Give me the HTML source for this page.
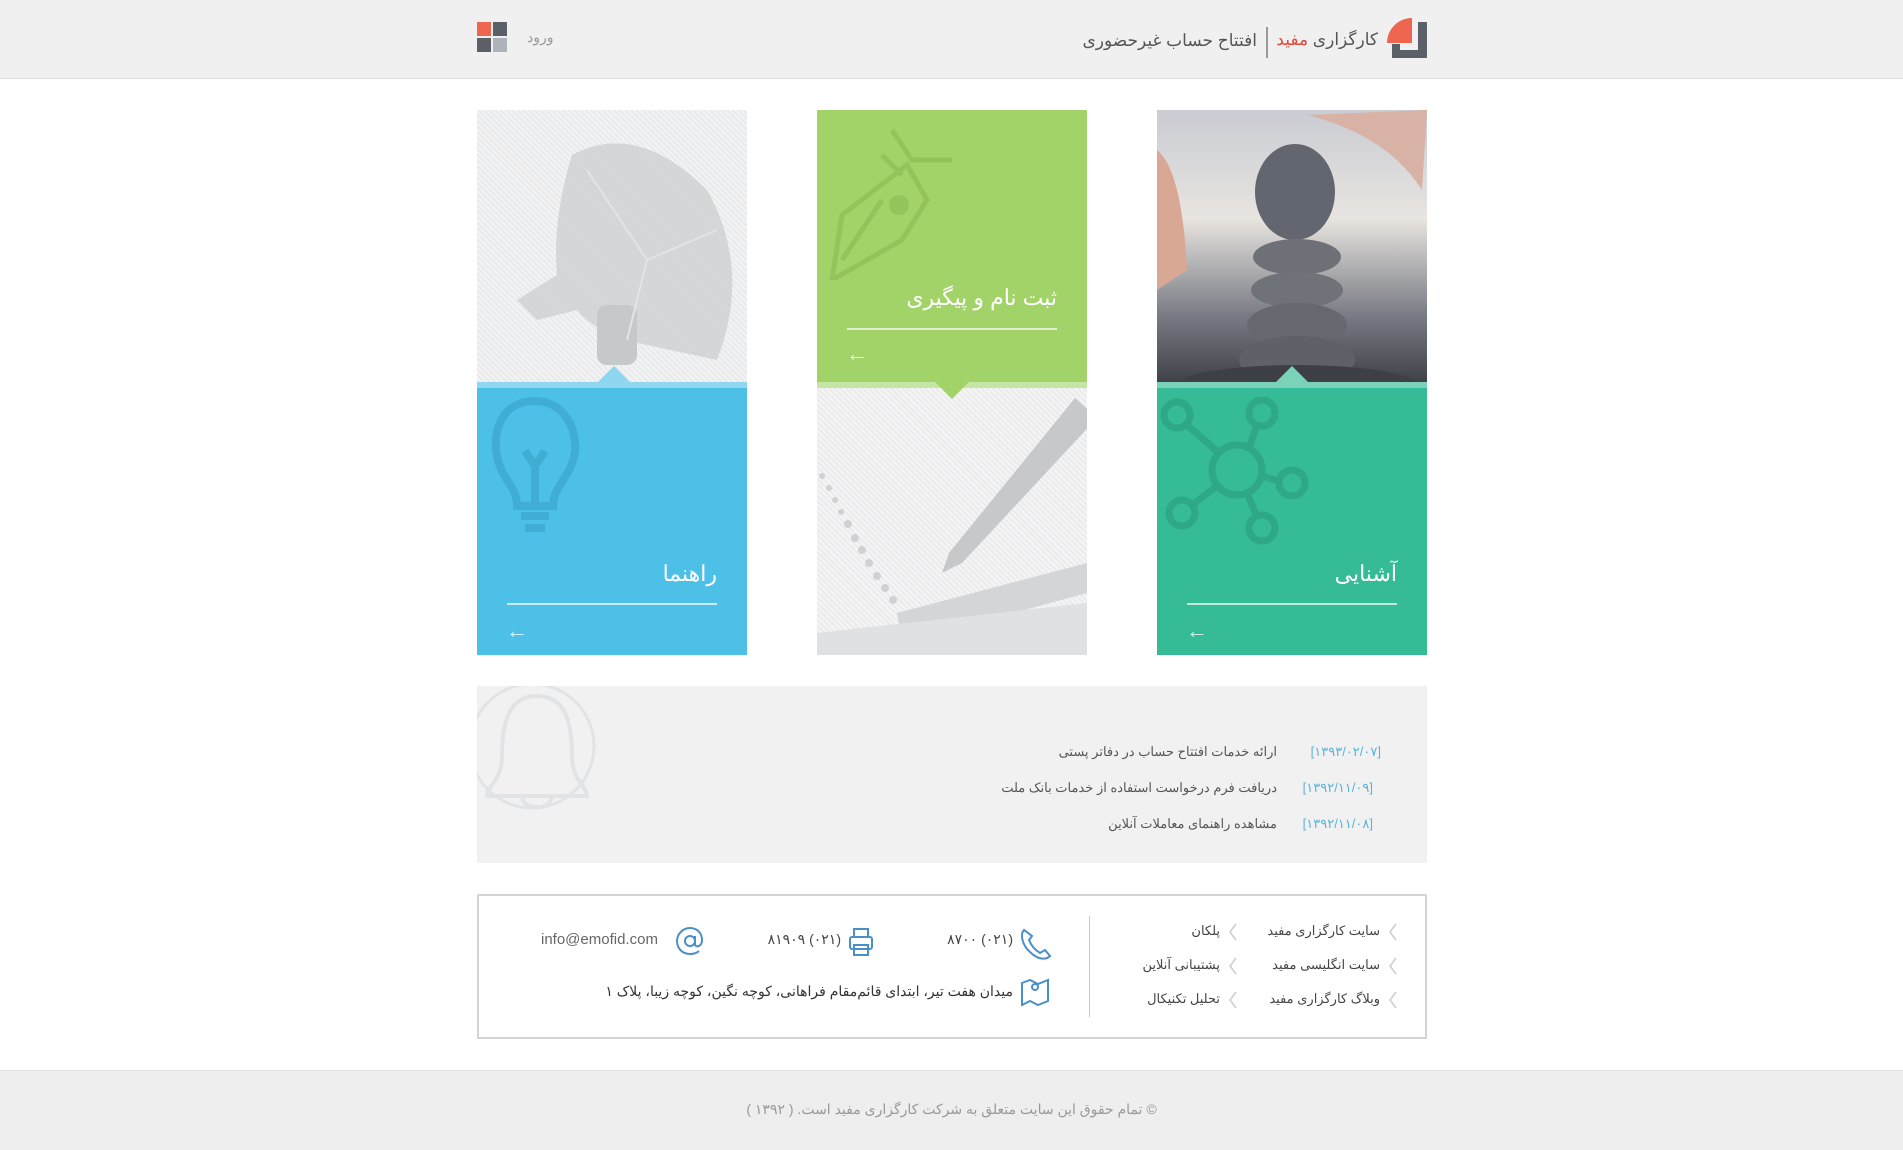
<!DOCTYPE html>
<html><head><meta charset="utf-8"><style>
*{margin:0;padding:0;box-sizing:border-box}
body{width:1903px;height:1150px;background:#fff;position:relative;overflow:hidden;font-family:"Liberation Sans","Noto Sans CJK SC",sans-serif;}
.a{position:absolute}
.r{position:absolute;direction:rtl;white-space:nowrap}
</style></head><body>
<!-- header -->
<div class="a" style="left:0;top:0;width:1903px;height:79px;background:#f0f0f0;border-bottom:1px solid #e2e2e2"></div>
<svg class="a" style="left:1387px;top:18px" width="40" height="40" viewBox="0 0 40 40">
<path d="M0 25 A25 25 0 0 1 25 0 L25 25 Z" fill="#ef6650"/>
<path d="M31 4 H40 V40 H5 V26 H13 V32 H31 Z" fill="#5b6068"/>
</svg>
<div class="r" style="right:525px;top:30px;font-size:17px;color:#555"><span>کارگزاری</span> <span style="color:#e04a3a">مفید</span></div>
<div class="a" style="left:1266px;top:27px;width:2px;height:31px;background:#999"></div>
<div class="r" style="right:646px;top:31px;font-size:17px;color:#555">افتتاح حساب غیرحضوری</div>
<div class="a" style="left:477px;top:22px;width:14px;height:14px;background:#ef6650"></div>
<div class="a" style="left:493px;top:22px;width:14px;height:14px;background:#5b6068"></div>
<div class="a" style="left:477px;top:38px;width:14px;height:14px;background:#5b6068"></div>
<div class="a" style="left:493px;top:38px;width:14px;height:14px;background:#aeb3ba"></div>
<div class="r" style="left:527px;top:29px;font-size:14px;color:#999">ورود</div>

<!-- card 1 -->
<div class="a" style="left:477px;top:110px;width:270px;height:272px;background:repeating-linear-gradient(45deg,#e9eaeb 0 2px,#f3f3f4 2px 4px);overflow:hidden">
<svg width="270" height="272"><path d="M95 45 Q160 10 230 80 Q275 160 240 250 L170 235 Q120 225 100 200 L60 210 L40 190 L80 165 Q75 110 95 45 Z" fill="#cfd1d3" opacity=".85"/><rect x="120" y="195" width="40" height="60" rx="10" fill="#c6c8ca"/><path d="M110 60 L170 150 L240 120 M170 150 L150 230" stroke="#e3e4e5" stroke-width="2" fill="none"/></svg></div>
<div class="a" style="left:477px;top:382px;width:270px;height:6px;background:#8fd6f0"></div>
<div class="a" style="left:477px;top:388px;width:270px;height:267px;background:#4dc0e8;overflow:hidden">
<svg class="a" style="left:10px;top:8px" width="110" height="150"><path d="M48 5 C15 5 5 35 10 60 C15 85 30 90 30 110 L66 110 C66 90 85 80 88 55 C90 30 75 5 48 5 Z M34 120 H62 M38 132 H58 M48 110 V70 L38 55 M48 70 L58 55" stroke="#3aa7cc" stroke-width="8" fill="none" opacity=".7"/></svg>
</div>
<div class="a" style="left:597px;top:366px;width:0;height:0;border-left:17px solid transparent;border-right:17px solid transparent;border-bottom:17px solid #8fd6f0"></div>
<div class="r" style="right:1186px;top:561px;font-size:22px;color:#fff">راهنما</div>
<div class="a" style="left:507px;top:603px;width:210px;height:2px;background:#c9ecf8"></div>
<div class="a" style="left:506px;top:618px;font-size:22px;color:#e2f5fc">&larr;</div>

<!-- card 2 -->
<div class="a" style="left:817px;top:110px;width:270px;height:272px;background:#a2d368;overflow:hidden">
<svg class="a" style="left:5px;top:10px" width="160" height="160"><path d="M70 10 L90 40 L130 40 M60 35 L80 55 M85 45 L20 95 L10 160 L80 120 L105 80 Z M60 80 L20 140" stroke="#93c35a" stroke-width="5" fill="none"/><circle cx="77" cy="85" r="10" fill="#93c35a"/></svg>
</div>
<div class="a" style="left:817px;top:382px;width:270px;height:6px;background:#c5e5a4"></div>
<div class="a" style="left:817px;top:388px;width:270px;height:267px;background:repeating-linear-gradient(45deg,#ebebec 0 2px,#f5f5f6 2px 4px);overflow:hidden">
<svg width="270" height="267"><path d="M258 10 L280 30 L145 175 L125 185 L132 165 Z" fill="#c6c8ca"/>
<path d="M80 225 L270 175 L270 205 L85 255 Z" fill="#d3d5d7"/><path d="M0 245 L270 215 L270 267 L0 267 Z" fill="#e0e1e2"/>
<g fill="#cfd1d3"><circle cx="5" cy="88" r="3"/><circle cx="12" cy="100" r="3"/><circle cx="18" cy="112" r="3"/><circle cx="24" cy="124" r="3"/><circle cx="31" cy="136" r="4"/><circle cx="38" cy="150" r="4"/><circle cx="45" cy="162" r="4"/><circle cx="52" cy="175" r="4"/><circle cx="60" cy="188" r="4"/><circle cx="68" cy="200" r="4"/><circle cx="76" cy="212" r="4"/></g></svg></div>
<div class="a" style="left:935px;top:382px;width:0;height:0;border-left:17px solid transparent;border-right:17px solid transparent;border-top:17px solid #a2d368"></div>
<div class="r" style="right:846px;top:285px;font-size:22px;color:#fff">ثبت نام و پیگیری</div>
<div class="a" style="left:847px;top:328px;width:210px;height:2px;background:#e1f1cf"></div>
<div class="a" style="left:846px;top:341px;font-size:22px;color:#eff8e5">&larr;</div>

<!-- card 3 -->
<div class="a" style="left:1157px;top:110px;width:270px;height:272px;background:linear-gradient(180deg,#c9ccd3 0%,#e8e4e0 40%,#7a7d85 75%,#3f4249 100%);overflow:hidden">
<svg width="270" height="272"><ellipse cx="138" cy="82" rx="40" ry="48" fill="#62666e"/><ellipse cx="140" cy="147" rx="44" ry="18" fill="#6d7077"/><ellipse cx="140" cy="180" rx="46" ry="18" fill="#6f7279"/><ellipse cx="140" cy="215" rx="50" ry="22" fill="#65686f"/><ellipse cx="140" cy="250" rx="58" ry="24" fill="#5e6168"/><ellipse cx="140" cy="275" rx="120" ry="20" fill="#3d4046"/><path d="M0 40 Q25 60 30 160 L0 180Z" fill="#d9a894"/><path d="M150 5 Q230 25 265 80 L270 0Z" fill="#d8b2a4"/></svg></div>
<div class="a" style="left:1157px;top:382px;width:270px;height:6px;background:#7ad3b9"></div>
<div class="a" style="left:1157px;top:388px;width:270px;height:267px;background:#35bc97;overflow:hidden">
<svg width="160" height="160"><g stroke="#2ea886" stroke-width="7" fill="none"><circle cx="80" cy="82" r="25"/><circle cx="20" cy="27" r="13"/><circle cx="105" cy="25" r="13"/><circle cx="135" cy="95" r="13"/><circle cx="25" cy="125" r="13"/><circle cx="105" cy="140" r="13"/><path d="M30 37 L62 65 M100 37 L92 60 M105 88 L122 93 M35 117 L60 98 M90 106 L100 128"/></g></svg>
</div>
<div class="a" style="left:1275px;top:366px;width:0;height:0;border-left:17px solid transparent;border-right:17px solid transparent;border-bottom:17px solid #7ad3b9"></div>
<div class="r" style="right:506px;top:561px;font-size:22px;color:#fff">آشنایی</div>
<div class="a" style="left:1187px;top:603px;width:210px;height:2px;background:#c0eadd"></div>
<div class="a" style="left:1186px;top:618px;font-size:22px;color:#d9f3ea">&larr;</div>

<!-- news -->
<div class="a" style="left:477px;top:686px;width:950px;height:177px;background:#f1f1f2;overflow:hidden">
<svg width="130" height="130"><path d="M60 10 C30 10 25 40 25 70 C25 95 10 100 10 110 H110 C110 100 95 95 95 70 C95 40 90 10 60 10 Z M45 110 C45 125 75 125 75 110" stroke="#e2e3e5" stroke-width="4" fill="none"/><circle cx="55" cy="60" r="62" stroke="#e2e3e5" stroke-width="3" fill="none"/></svg></div>
<div class="r" style="right:522px;top:744px;font-size:13px;color:#5ab3d8">[۱۳۹۳/۰۲/۰۷]</div>
<div class="r" style="right:626px;top:744px;font-size:13px;color:#555">ارائه خدمات افتتاح حساب در دفاتر پستی</div>
<div class="r" style="right:530px;top:780px;font-size:13px;color:#5ab3d8">[۱۳۹۲/۱۱/۰۹]</div>
<div class="r" style="right:626px;top:780px;font-size:13px;color:#555">دریافت فرم درخواست استفاده از خدمات بانک ملت</div>
<div class="r" style="right:530px;top:816px;font-size:13px;color:#5ab3d8">[۱۳۹۲/۱۱/۰۸]</div>
<div class="r" style="right:626px;top:816px;font-size:13px;color:#555">مشاهده راهنمای معاملات آنلاین</div>

<!-- footer box -->
<div class="a" style="left:477px;top:894px;width:950px;height:145px;border:2px solid #d3d4d6;background:#fff"></div>
<div class="a" style="left:1089px;top:916px;width:1px;height:101px;background:#c8c8c8"></div>
<div class="r" style="right:523px;top:923px;font-size:13px;color:#444">سایت کارگزاری مفید</div>
<div class="r" style="right:523px;top:957px;font-size:13px;color:#444">سایت انگلیسی مفید</div>
<div class="r" style="right:523px;top:991px;font-size:13px;color:#444">وبلاگ کارگزاری مفید</div>
<div class="r" style="right:683px;top:923px;font-size:13px;color:#444">پلکان</div>
<div class="r" style="right:683px;top:957px;font-size:13px;color:#444">پشتیبانی آنلاین</div>
<div class="r" style="right:683px;top:991px;font-size:13px;color:#444">تحلیل تکنیکال</div>
<svg class="a" style="left:0;top:0" width="1903" height="1150" fill="none" stroke="#ccc" stroke-width="1.5">
<path d="M1396 924 L1390 932 L1396 940 M1396 958 L1390 966 L1396 974 M1396 992 L1390 1000 L1396 1008 M1236 924 L1230 932 L1236 940 M1236 958 L1230 966 L1236 974 M1236 992 L1230 1000 L1236 1008"/>
<g stroke="#4a90c8" stroke-width="2"><path d="M1024 930 C1020 934 1022 945 1030 952 C1038 960 1046 960 1050 956 L1045 950 L1040 953 C1035 950 1031 945 1029 940 L1032 936 Z"/>
<rect x="854" y="929" width="14" height="8"/><rect x="850" y="937" width="22" height="12" rx="2"/><rect x="854" y="945" width="14" height="10"/>
<circle cx="690" cy="941" r="5"/><path d="M695 936 V944 C695 948 702 947 702 940 C702 932 696 928 690 928 C683 928 677 934 677 941 C677 949 683 954 690 954 C694 954 697 953 699 951"/>
<path d="M1022 983 L1030 980 L1038 984 L1048 980 V1001 L1038 1005 L1030 1001 L1022 1005 Z"/><circle cx="1035" cy="987" r="3"/></g></svg>
<div class="r" style="right:890px;top:931px;font-size:14px;color:#444">(۰۲۱) ۸۷۰۰</div>
<div class="r" style="right:1062px;top:931px;font-size:14px;color:#444">(۰۲۱) ۸۱۹۰۹</div>
<div class="a" style="left:541px;top:931px;font-size:15px;color:#666">info@emofid.com</div>
<div class="r" style="right:890px;top:983px;font-size:14px;color:#333">میدان هفت تیر، ابتدای قائم‌مقام فراهانی، کوچه نگین، کوچه زیبا، پلاک ۱</div>

<!-- bottom bar -->
<div class="a" style="left:0;top:1070px;width:1903px;height:80px;background:#eeeeee;border-top:1px solid #e0e0e0"></div>
<div class="r" style="left:0;width:1903px;text-align:center;top:1101px;font-size:14px;color:#999">© تمام حقوق این سایت متعلق به شرکت کارگزاری مفید است. ( ۱۳۹۲ )</div>
</body></html>
